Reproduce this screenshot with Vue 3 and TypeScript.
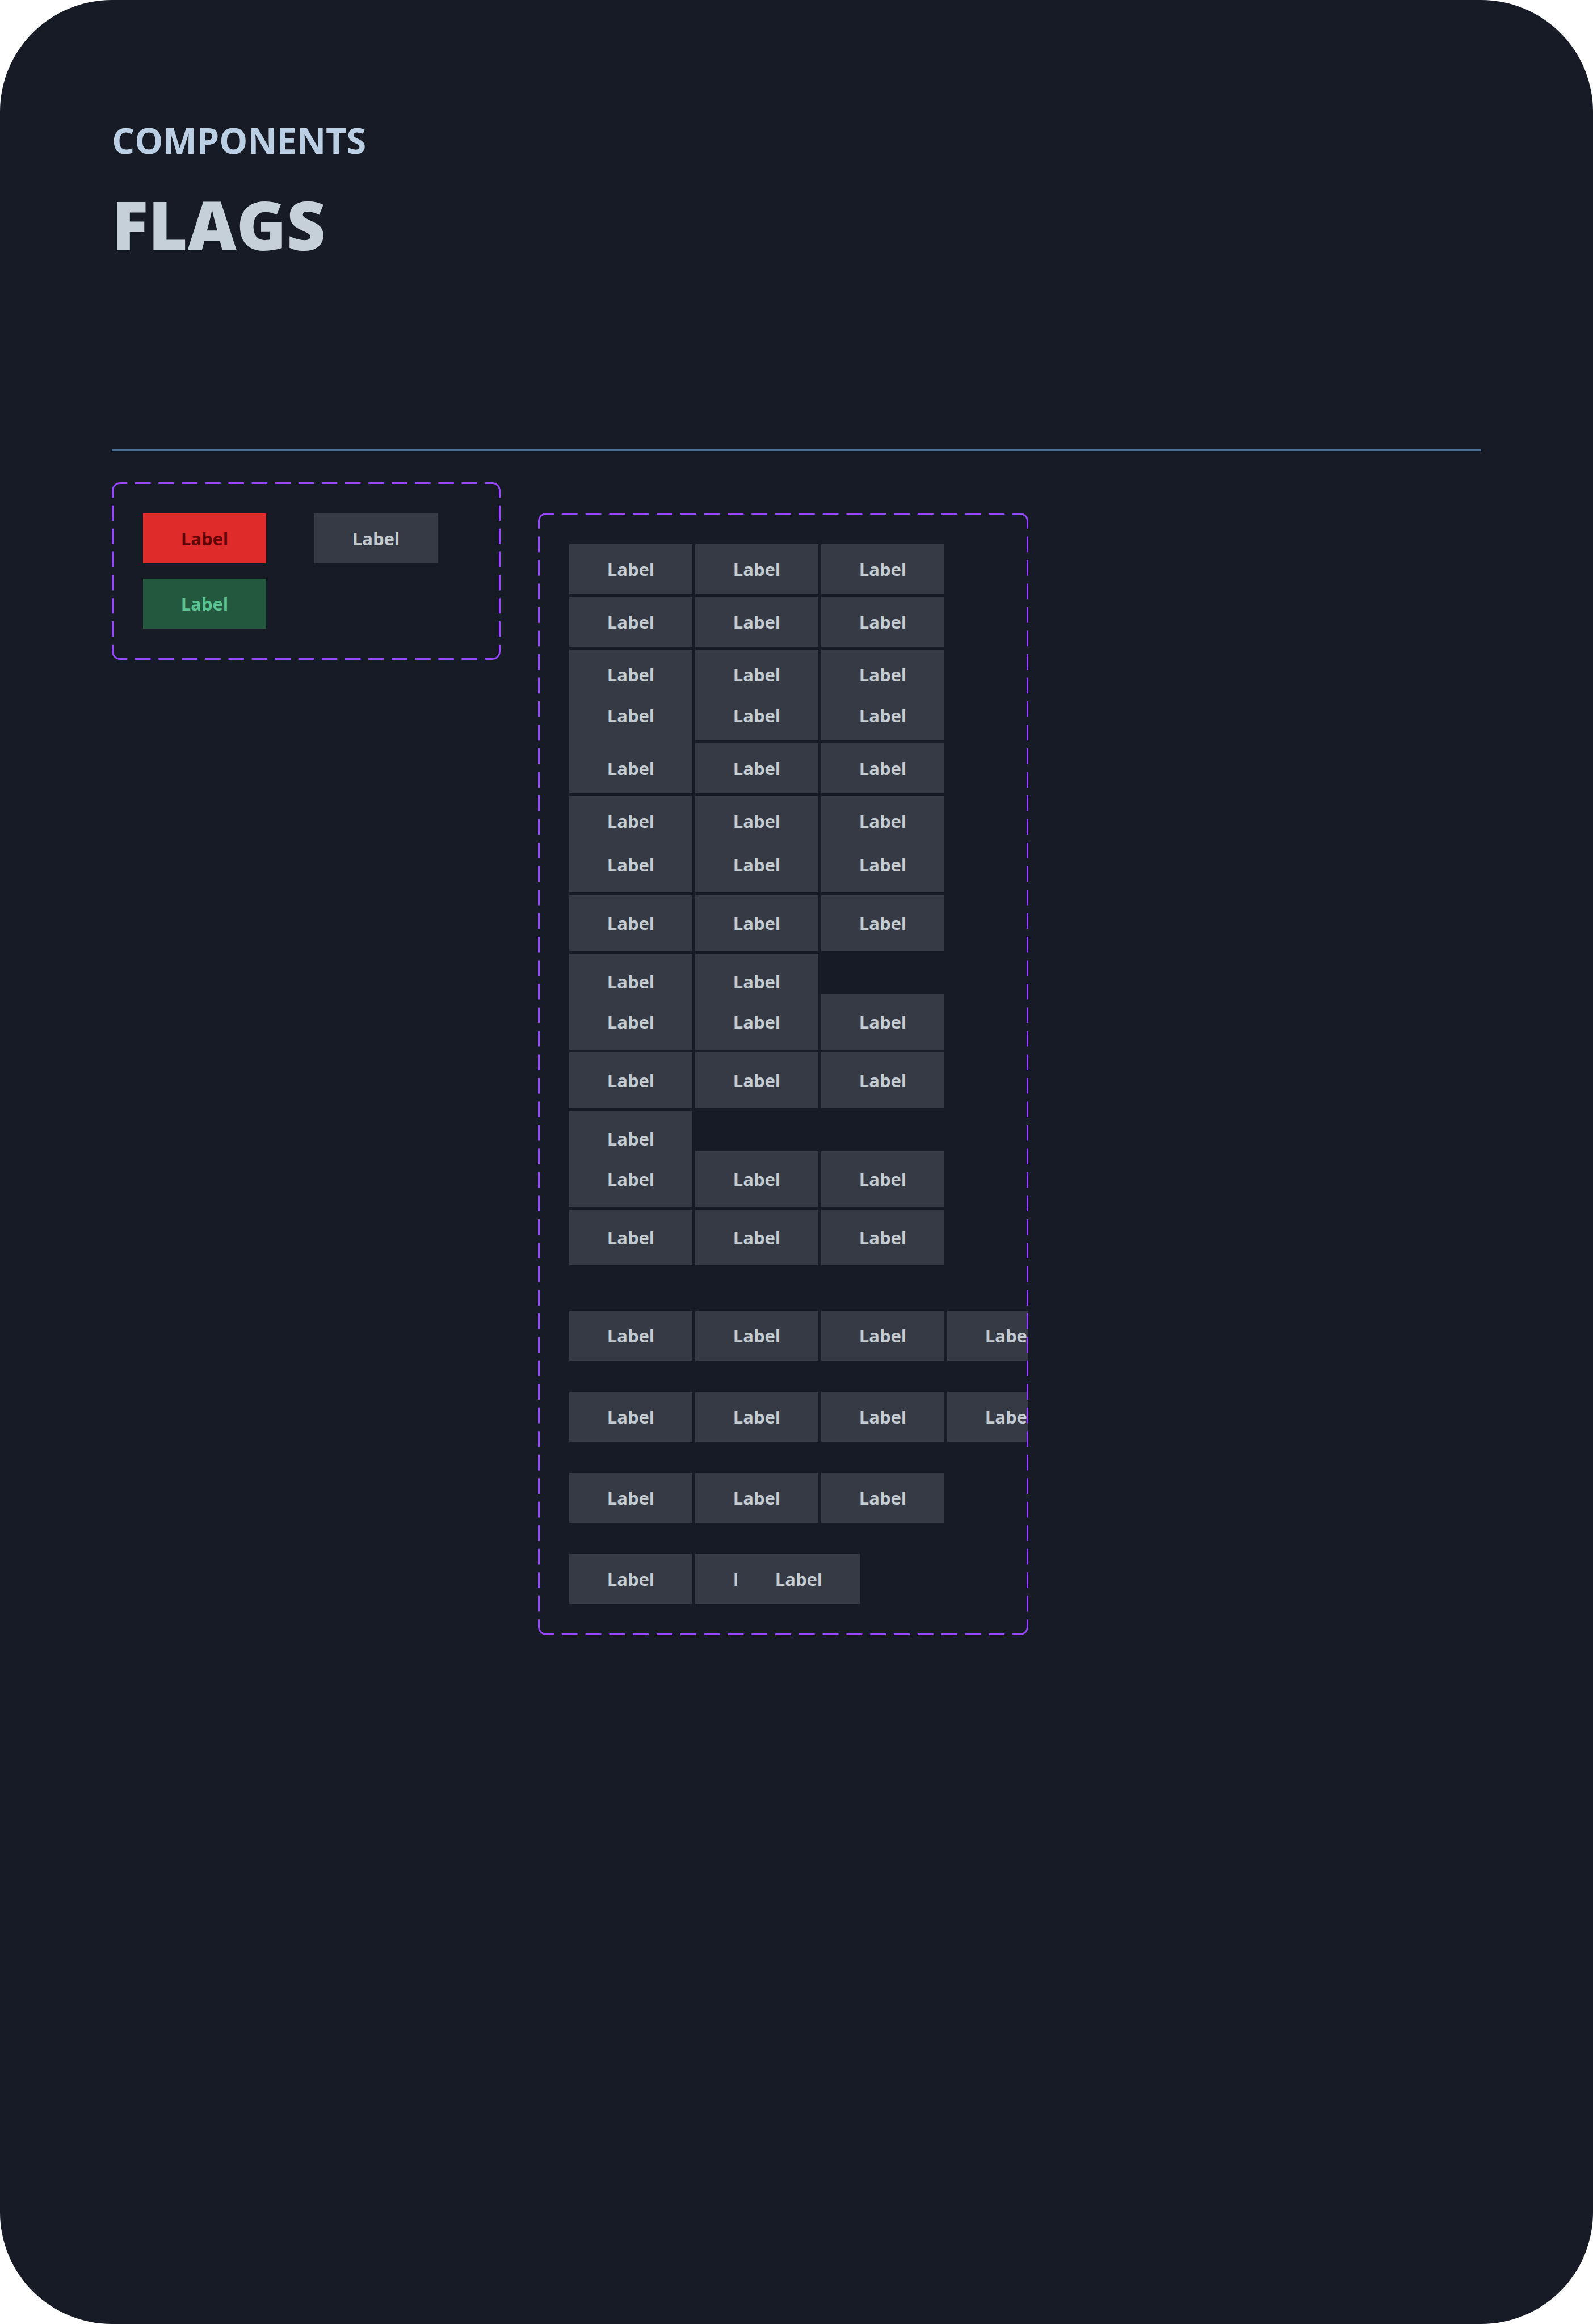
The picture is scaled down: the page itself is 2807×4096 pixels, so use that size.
<script setup lang="ts">
type Tone = 'neutral' | 'danger' | 'success'

interface Row {
  count: number
  bridged?: boolean
  overlapped?: boolean
}

interface Group {
  kind: 'first' | 'stacked' | 'tall' | 'spaced' | 'apart'
  high?: boolean
  rows: Row[]
}

interface Frame {
  width: number
  height: number
  path: string
}

const variants: Tone[] = ['danger', 'neutral', 'success']

const groups: Group[] = [
  { kind: 'first', rows: [{ count: 3 }, { count: 3 }, { count: 3 }] },
  { kind: 'stacked', rows: [{ count: 3, bridged: true }, { count: 3 }, { count: 3 }] },
  { kind: 'stacked', high: true, rows: [{ count: 3 }, { count: 3 }, { count: 2 }] },
  { kind: 'tall', high: true, rows: [{ count: 3 }, { count: 3 }, { count: 1 }] },
  { kind: 'tall', high: true, rows: [{ count: 3 }, { count: 3 }] },
  { kind: 'spaced', rows: [{ count: 4 }] },
  { kind: 'apart', rows: [{ count: 4 }] },
  { kind: 'apart', rows: [{ count: 3 }] },
  { kind: 'apart', rows: [{ count: 3, overlapped: true }] },
]

// Dashed frame: every side starts and ends with a full dash, so corners stay solid.
// A gap is one unit long and a dash is two.
function frame(width: number, height: number, across: number, down: number): Frame {
  const i = 1.5
  const r = 13
  const ux = width / (across * 3 - 1)
  const uy = height / (down * 3 - 1)
  const right = width - i
  const bottom = height - i
  const parts: string[] = [
    `M${i} ${2 * uy}V${i + r}A${r} ${r} 0 0 1 ${i + r} ${i}H${2 * ux}`,
    `M${width - 2 * ux} ${i}H${right - r}A${r} ${r} 0 0 1 ${right} ${i + r}V${2 * uy}`,
    `M${right} ${height - 2 * uy}V${bottom - r}A${r} ${r} 0 0 1 ${right - r} ${bottom}H${width - 2 * ux}`,
    `M${2 * ux} ${bottom}H${i + r}A${r} ${r} 0 0 1 ${i} ${bottom - r}V${height - 2 * uy}`,
  ]
  for (let n = 1; n < across - 1; n++) {
    const x = n * 3 * ux
    parts.push(`M${x} ${i}h${2 * ux}M${x} ${bottom}h${2 * ux}`)
  }
  for (let n = 1; n < down - 1; n++) {
    const y = n * 3 * uy
    parts.push(`M${i} ${y}v${2 * uy}M${right} ${y}v${2 * uy}`)
  }
  return { width, height, path: parts.join('') }
}

const variantFrame = frame(685, 313, 17, 8)
const stackFrame = frame(864, 1978, 21, 48)
</script>

<template>
  <main class="sheet">
    <header class="header">
      <p class="eyebrow">COMPONENTS</p>
      <h1 class="title">FLAGS</h1>
    </header>
    <hr class="divider" />
    <div class="panels">
      <section class="panel variants" aria-label="Flag variants">
        <span v-for="tone in variants" :key="tone" class="flag" :class="tone">Label</span>
        <svg
          class="frame"
          :viewBox="`0 0 ${variantFrame.width} ${variantFrame.height}`"
          preserveAspectRatio="none"
          aria-hidden="true"
        >
          <path :d="variantFrame.path" />
        </svg>
      </section>

      <section class="panel stack" aria-label="Flag groups">
        <div
          v-for="(group, g) in groups"
          :key="g"
          class="group"
          :class="[group.kind, { high: group.high }]"
        >
          <div
            v-for="(row, r) in group.rows"
            :key="r"
            class="row"
            :class="{ bridged: row.bridged, overlapped: row.overlapped }"
          >
            <span v-for="n in row.count" :key="n" class="flag neutral">Label</span>
          </div>
        </div>
        <svg
          class="frame"
          :viewBox="`0 0 ${stackFrame.width} ${stackFrame.height}`"
          preserveAspectRatio="none"
          aria-hidden="true"
        >
          <path :d="stackFrame.path" />
        </svg>
      </section>
    </div>
  </main>
</template>

<style>
body {
  margin: 0;
  background: #ffffff;
}
</style>

<style scoped>
.sheet {
  box-sizing: border-box;
  min-height: 100vh;
  padding: 197px;
  border-radius: 197px;
  background: #171b25;
  font-family: "Open Sans", "Noto Sans", sans-serif;
}

.eyebrow {
  margin: 0;
  color: #bacfe4;
  font-size: 63px;
  font-weight: 700;
  line-height: 100px;
}

.title {
  margin: 18px 0 0;
  color: #c5d0d9;
  font-size: 119px;
  font-weight: 800;
  line-height: 160px;
}

.divider {
  height: 3px;
  margin: 317px 0 55px;
  border: 0;
  background: #507092;
}

.panels {
  display: flex;
  align-items: flex-start;
  gap: 66px;
}

.panel {
  position: relative;
  box-sizing: border-box;
  flex: none;
  padding: 55px;
  border-radius: 14px;
  overflow: hidden;
}

.variants {
  display: grid;
  grid-template-columns: 217px 217px;
  gap: 27px 85px;
  width: 685px;
}

.stack {
  width: 864px;
  margin-top: 54px;
}

.frame {
  position: absolute;
  inset: 0;
  width: 100%;
  height: 100%;
  fill: none;
  stroke: #9747ff;
  stroke-width: 3px;
}

.group {
  display: flex;
  flex-direction: column;
  gap: 5px;
}

.stacked {
  margin-top: -16px;
}

.tall {
  margin-top: -27px;
}

.spaced {
  margin-top: 80px;
}

.apart {
  margin-top: 55px;
}

.row {
  display: flex;
  gap: 5px;
}

.flag {
  display: flex;
  align-items: center;
  justify-content: center;
  flex: none;
  width: 217px;
  height: 88px;
  font-size: 31px;
  font-weight: 700;
  line-height: 44px;
}

.high .flag {
  height: 98px;
}

.bridged .flag:first-child {
  box-shadow: 0 5px 0 #363a45;
}

.overlapped .flag:last-child {
  margin-left: -148px;
}

.neutral {
  background: #363a45;
  color: #c4ccd2;
}

.danger {
  background: #df2b2a;
  color: #5f0508;
}

.success {
  background: #23573e;
  color: #5bc493;
}
</style>
